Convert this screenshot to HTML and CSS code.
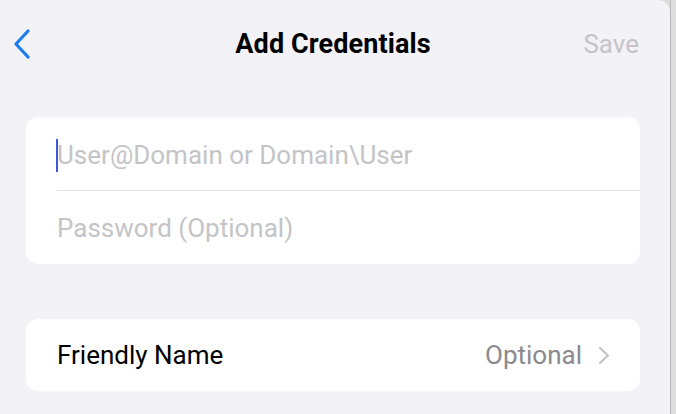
FILE: index.html
```html
<!DOCTYPE html>
<html lang="en">
<head>
    <meta charset="UTF-8">
    <meta name="viewport" content="width=device-width, initial-scale=1.0">
    <title>Add Credentials</title>
    <link rel="stylesheet" href="styles.css">
</head>
<body>
    <div class="screen">
        <div class="sheet">
            <div class="navbar">
                <button class="back" aria-label="Back">
                    <svg width="18" height="30" viewBox="0 0 18 30">
                        <path d="M15 2 L3 15 L15 28" fill="none" stroke="#1a7cf0" stroke-width="3.2" stroke-linecap="round" stroke-linejoin="round"/>
                    </svg>
                </button>
                <h1 class="title">Add Credentials</h1>
                <span class="save">Save</span>
            </div>

            <div class="group">
                <div class="field">
                    <span class="cursor"></span>
                    <span class="placeholder">User@Domain or Domain\User</span>
                </div>
                <div class="field">
                    <span class="placeholder">Password (Optional)</span>
                </div>
            </div>

            <div class="group">
                <div class="row">
                    <span class="label">Friendly Name</span>
                    <span class="value">Optional</span>
                    <svg class="chevron" width="12" height="19" viewBox="0 0 12 19">
                        <path d="M2 2 L10 9.5 L2 17" fill="none" stroke="#c4c4c7" stroke-width="2.2" stroke-linecap="round" stroke-linejoin="round"/>
                    </svg>
                </div>
            </div>
        </div>
        <div class="edge"></div>
    </div>
</body>
</html>
```

FILE: styles.css
```css
html, body {
    margin: 0;
    padding: 0;
    width: 676px;
    height: 414px;
    overflow: hidden;
    font-family: Roboto, "Liberation Sans", Arial, sans-serif;
}
.screen {
    display: flex;
    height: 414px;
    background-color: #dcdcdd;
}
.sheet {
    flex: 1;
    background-color: #f2f2f7;
    border-top-right-radius: 12px;
    padding: 0 30px 0 26px;
}
.edge {
    width: 5px;
    border-left: 1px solid #b9b9bb;
    background-color: #dedede;
}
.navbar {
    display: grid;
    grid-template-columns: 1fr auto 1fr;
    align-items: center;
    height: 88px;
}
.back {
    justify-self: start;
    background: none;
    border: none;
    padding: 0;
    margin-left: -13px;
    display: flex;
    cursor: pointer;
}
.title {
    margin: 0;
    font-size: 27px;
    font-weight: 700;
    color: #000;
    letter-spacing: 0.1px;
}
.save {
    justify-self: end;
    font-size: 26px;
    color: #c4c4c7;
    margin-right: 1px;
}
.group {
    background-color: #fff;
    border-radius: 12px;
    margin-top: 29px;
    padding-left: 31px;
}
.group + .group {
    margin-top: 55px;
}
.field {
    display: flex;
    align-items: center;
    height: 73px;
    font-size: 26px;
}
.field:first-child {
    padding-top: 3px;
    height: 70px;
}
.field + .field {
    border-top: 1px solid #e1e1e3;
}
.placeholder {
    color: #c4c4c7;
}
.cursor {
    width: 2px;
    height: 33px;
    background-color: #3d5bd9;
    margin-left: -1px;
    margin-right: -1px;
}
.row {
    display: flex;
    align-items: center;
    height: 72px;
    padding-right: 30px;
    font-size: 26px;
}
.label {
    flex: 1;
    color: #000;
}
.value {
    color: #8a8a8e;
    margin-right: 16px;
}
```
